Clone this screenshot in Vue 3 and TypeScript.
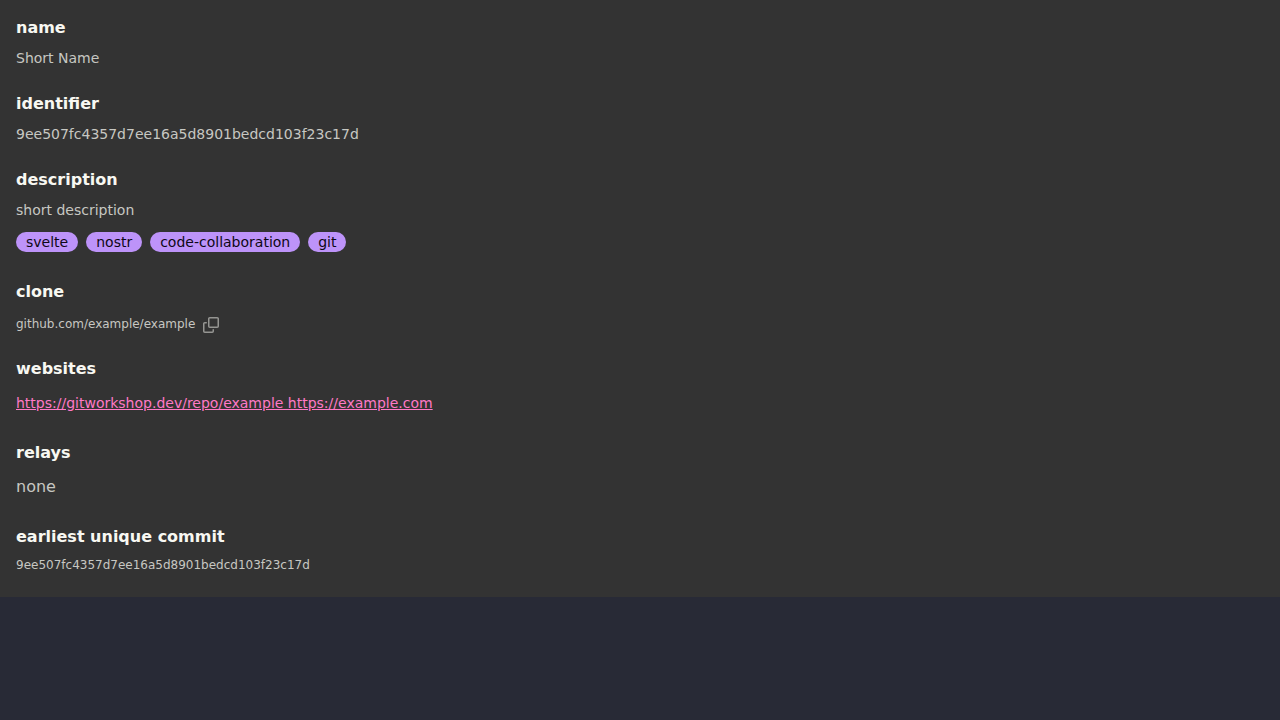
<script setup lang="ts">
const name = 'Short Name'
const commit = '9ee507fc4357d7ee16a5d8901bedcd103f23c17d'
const description = 'short description'
const tags: string[] = ['svelte', 'nostr', 'code-collaboration', 'git']
const cloneUrl = 'github.com/example/example'
const websites = 'https://gitworkshop.dev/repo/example https://example.com'

function copyCloneUrl(): void {
  void navigator.clipboard?.writeText(cloneUrl)
}
</script>

<template>
  <main class="details">
    <section>
      <h4>name</h4>
      <p>{{ name }}</p>
    </section>
    <section>
      <h4>identifier</h4>
      <p>{{ commit }}</p>
    </section>
    <section>
      <h4>description</h4>
      <p>{{ description }}</p>
      <div class="tags">
        <span v-for="tag in tags" :key="tag" class="tag">{{ tag }}</span>
      </div>
    </section>
    <section>
      <h4>clone</h4>
      <div class="clone">
        <span class="small">{{ cloneUrl }}</span>
        <button type="button" class="copy" aria-label="copy clone url" @click="copyCloneUrl">
          <svg viewBox="0 0 16 16" width="16" height="16" aria-hidden="true">
            <path
              d="M0 6.75C0 5.784.784 5 1.75 5h1.5a.75.75 0 0 1 0 1.5h-1.5a.25.25 0 0 0-.25.25v7.5c0 .138.112.25.25.25h7.5a.25.25 0 0 0 .25-.25v-1.5a.75.75 0 0 1 1.5 0v1.5A1.75 1.75 0 0 1 9.25 16h-7.5A1.75 1.75 0 0 1 0 14.25Z"
            />
            <path
              d="M5 1.75C5 .784 5.784 0 6.75 0h7.5C15.216 0 16 .784 16 1.75v7.5A1.75 1.75 0 0 1 14.25 11h-7.5A1.75 1.75 0 0 1 5 9.25Zm1.75-.25a.25.25 0 0 0-.25.25v7.5c0 .138.112.25.25.25h7.5a.25.25 0 0 0 .25-.25v-7.5a.25.25 0 0 0-.25-.25Z"
            />
          </svg>
        </button>
      </div>
    </section>
    <section>
      <h4>websites</h4>
      <div class="links">
        <a class="link" :href="websites" target="_blank">{{ websites }}</a>
      </div>
    </section>
    <section>
      <h4>relays</h4>
      <div class="none">none</div>
    </section>
    <section>
      <h4>earliest unique commit</h4>
      <p class="small">{{ commit }}</p>
    </section>
  </main>
</template>

<style>
body {
  margin: 0;
  background: #282a36;
}
</style>

<style scoped>
.details {
  display: flow-root;
  padding: 16px 16px 0;
  background: #333333;
  color: #c7c7c2;
  font-family: "DejaVu Sans", sans-serif;
  font-size: 14px;
  line-height: 20px;
}

section {
  margin-bottom: 24px;
}

h4 {
  margin: 0 0 8px;
  color: #f8f8f2;
  font-size: 16px;
  font-weight: 700;
  line-height: 24px;
}

p {
  margin: 0;
}

.small {
  font-size: 12px;
  line-height: 16px;
}

.tags {
  display: flex;
  flex-wrap: wrap;
  gap: 8px;
  padding: 12px 0 4px;
}

.tag {
  padding: 0 10px;
  border-radius: 10px;
  background: #bd93f9;
  color: #0d0815;
}

.clone {
  display: flex;
  gap: 8px;
  padding-top: 4px;
}

.copy {
  width: 16px;
  height: 16px;
  margin-top: 1px;
  padding: 0;
  border: 0;
  background: none;
  cursor: pointer;
}

.copy svg {
  display: block;
  fill: #959592;
}

.links {
  padding: 4px 0;
}

.link {
  color: #ff79c6;
  text-decoration: underline;
}

.none {
  padding: 2px 0;
  font-size: 16px;
  line-height: 24px;
}
</style>
